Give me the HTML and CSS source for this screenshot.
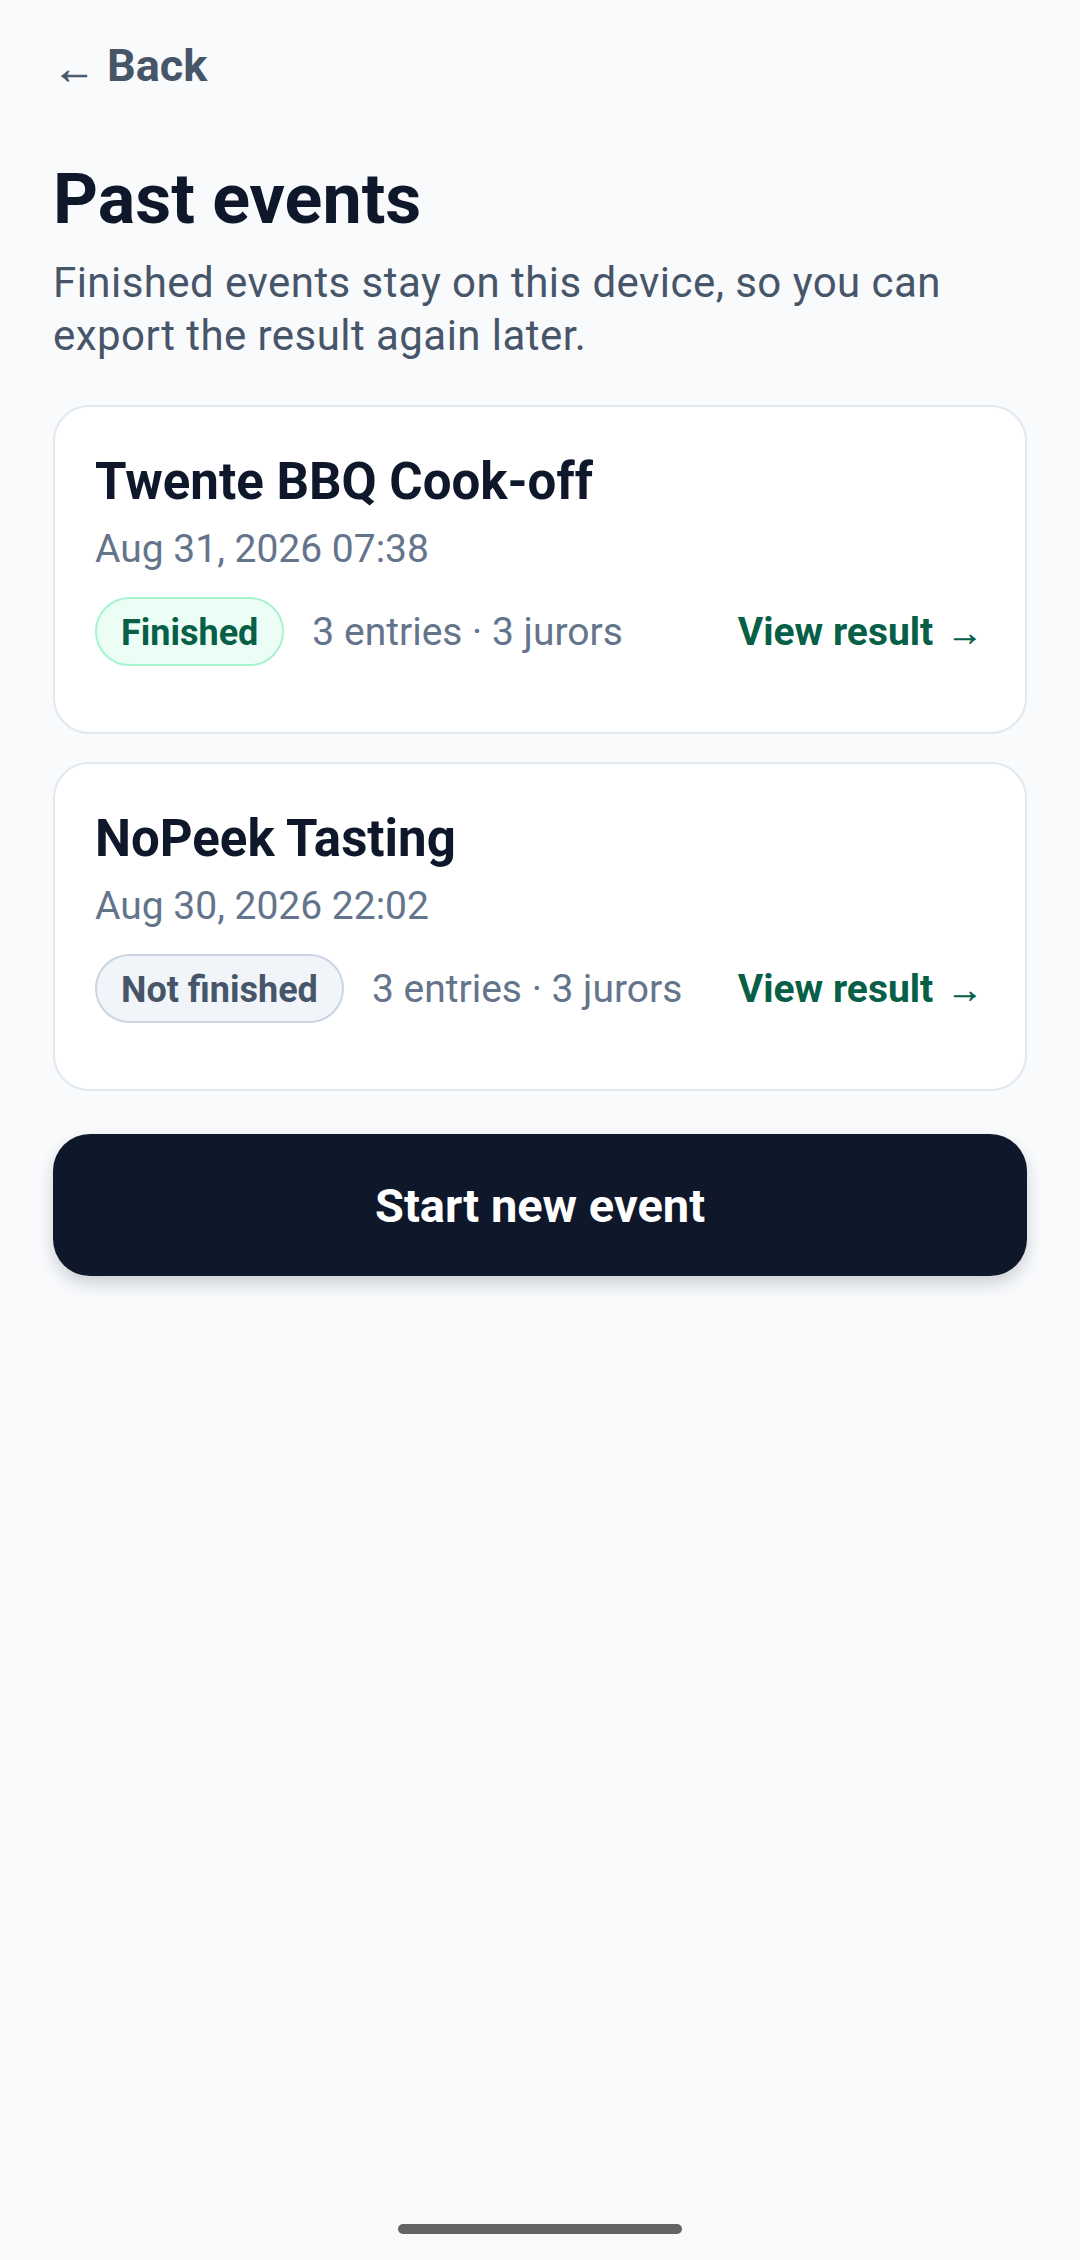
FILE: index.html
```html
<!DOCTYPE html>
<html lang="en">
<head>
<meta charset="utf-8">
<title>Past events</title>
<link rel="stylesheet" href="styles.css">
</head>
<body>
<div class="app">
  <main class="screen">
    <a class="back" href="#"><span class="back-arrow">←</span><span class="back-label">Back</span></a>
    <h1 class="title">Past events</h1>
    <p class="subtitle">Finished events stay on this device, so you can export the result again later.</p>

    <section class="list">
      <article class="card">
        <h2 class="card-title">Twente BBQ Cook-off</h2>
        <div class="card-date">Aug 31, 2026 07:38</div>
        <div class="card-row">
          <span class="badge badge-done">Finished</span>
          <span class="meta">3 entries · 3 jurors</span>
          <a class="view" href="#">View result <span class="arrow">→</span></a>
        </div>
      </article>

      <article class="card">
        <h2 class="card-title">NoPeek Tasting</h2>
        <div class="card-date">Aug 30, 2026 22:02</div>
        <div class="card-row">
          <span class="badge badge-open">Not finished</span>
          <span class="meta">3 entries · 3 jurors</span>
          <a class="view" href="#">View result <span class="arrow">→</span></a>
        </div>
      </article>
    </section>

    <button class="primary" type="button">Start new event</button>
  </main>
  <div class="home-indicator"></div>
</div>
</body>
</html>
```

FILE: styles.css
```css
* {
  box-sizing: border-box;
}

html, body {
  margin: 0;
  padding: 0;
  background: #f8fafc;
}

body {
  font-family: Roboto, "Noto Sans", "Liberation Sans", sans-serif;
  color: #0f172a;
}

.app {
  min-height: 2260px;
  display: flex;
  flex-direction: column;
}

.screen {
  display: flex;
  flex-direction: column;
  padding: 36px 53px 0 53px;
}

.back {
  align-self: flex-start;
  display: flex;
  align-items: center;
  gap: 12px;
  font-size: 45px;
  line-height: 60px;
  font-weight: 700;
  color: #475569;
  text-decoration: none;
}

.back-arrow {
  font-size: 42px;
  font-weight: 400;
  line-height: 60px;
  position: relative;
  top: 3px;
  -webkit-text-stroke: 0.8px #475569;
}

.title {
  margin: 62px 0 0 0;
  font-size: 70px;
  line-height: 82px;
  font-weight: 700;
  color: #0f172a;
}

.subtitle {
  margin: 17px 0 0 0;
  font-size: 42px;
  line-height: 52.5px;
  letter-spacing: 0.45px;
  color: #475569;
}

.list {
  margin-top: 43px;
  display: flex;
  flex-direction: column;
  gap: 28px;
}

.card {
  background: #ffffff;
  border: 2.5px solid #e2e8f0;
  border-radius: 36px;
  padding: 42px 42px 66px 40px;
}

.card-title {
  margin: 0;
  font-size: 51px;
  line-height: 66px;
  font-weight: 700;
  color: #0f172a;
}

.card-date {
  margin-top: 8px;
  font-size: 39px;
  line-height: 52px;
  color: #64748b;
}

.card-row {
  margin-top: 22px;
  display: flex;
  align-items: center;
}

.badge {
  display: inline-flex;
  align-items: center;
  height: 69px;
  padding: 3px 24px 0 24px;
  border-radius: 999px;
  border: 2.5px solid;
  font-size: 36px;
  font-weight: 700;
}

.badge-done {
  background: #ecfdf5;
  border-color: #a7f3d0;
  color: #065f46;
}

.badge-open {
  background: #f1f5f9;
  border-color: #cbd5e1;
  color: #475569;
}

.meta {
  margin-left: 28px;
  font-size: 39px;
  color: #64748b;
}

.view {
  margin-left: auto;
  font-size: 39px;
  font-weight: 700;
  color: #065f46;
  text-decoration: none;
}

.arrow {
  font-weight: 400;
  font-size: 36px;
  margin-left: 4px;
  -webkit-text-stroke: 0.6px #065f46;
}

.primary {
  margin-top: 43px;
  height: 142px;
  border: none;
  border-radius: 37px;
  background: #0f172a;
  color: #ffffff;
  font-family: Roboto, "Noto Sans", "Liberation Sans", sans-serif;
  font-size: 47px;
  font-weight: 700;
  box-shadow: 0 8px 16px rgba(15, 23, 42, 0.18);
}

.home-indicator {
  margin: auto auto 26px auto;
  width: 284px;
  height: 10px;
  border-radius: 5px;
  background: #636564;
}
```
